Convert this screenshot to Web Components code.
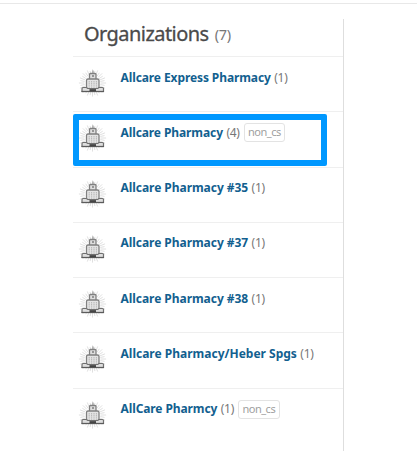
<!DOCTYPE html>
<html lang="en"><head><meta charset="utf-8"><title>Organizations</title>
<style>body{margin:0;background:#fff;font-family:"Noto Sans","Open Sans",sans-serif}
.wide{--name-spacing:0px}.mid{--name-spacing:-.05px}</style></head>
<body>
<org-panel count="7">
<org-row name="Allcare Express Pharmacy" count="1"></org-row>
<org-row name="Allcare Pharmacy" count="4" tag="non_cs" selected></org-row>
<org-row class="mid" name="Allcare Pharmacy #35" count="1"></org-row>
<org-row class="mid" name="Allcare Pharmacy #37" count="1"></org-row>
<org-row class="mid" name="Allcare Pharmacy #38" count="1"></org-row>
<org-row class="wide" name="Allcare Pharmacy/Heber Spgs" count="1"></org-row>
<org-row name="AllCare Pharmcy" count="1" tag="non_cs"></org-row>
</org-panel>
<script>
class OrgIcon extends HTMLElement{
 constructor(){super();
  let rays='';
  for(let i=0;i<32;i++){const a=i*Math.PI/16,c=Math.cos(a),s=Math.sin(a),r=i%2?12.3:13.6;
   rays+=`M${(14.5+8*c).toFixed(2)} ${(14+8*s).toFixed(2)}L${(14.5+r*c).toFixed(2)} ${(14+r*s).toFixed(2)}`;}
  this.attachShadow({mode:'open'}).innerHTML=`<style>:host{display:block;width:29px;height:28px}svg{display:block}</style>
<svg width="29" height="28" viewBox="0 0 29 28" fill="none">
<path d="${rays}" stroke="#d8d8d8" stroke-width=".8"/>
<path d="M15 1.500v3" stroke="#999" stroke-width="1.200"/>
<path d="M11.500 10V5.500q0-1 1-1h4.500q1 0 1 1V10" fill="#dedede" stroke="#808080" stroke-width="1.300"/>
<path d="M15 6v2" stroke="#777" stroke-width="1.400"/>
<path d="M8.500 20v-8.500q0-1.500 1.500-1.500h9.500q1.500 0 1.500 1.500V20z" fill="#e4e4e4" stroke="#808080" stroke-width="1.300"/>
<path d="M11.200 12v7M13.600 12v7M16 12v7M18.400 12v7" stroke="#b8b8b8" stroke-width="1.100" stroke-dasharray="1.400 .7"/>
<path d="M4 22.500v-3q0-1 1-1h3.500l1.200 1h10l1.200-1h3.600q1 0 1 1v3z" fill="#dedede" stroke="#707070" stroke-width="1.200"/>
<path d="M3.500 22.500h22.500" stroke="#5c5c5c" stroke-width="1.300"/>
<path d="M11.500 21.200h6.500" stroke="#444" stroke-width="2.200"/></svg>`;}
}
customElements.define('org-icon',OrgIcon);
class OrgRow extends HTMLElement{
 connectedCallback(){const g=n=>this.getAttribute(n);
  this.attachShadow({mode:'open'}).innerHTML=`<style>
:host{display:flex;position:relative;box-sizing:border-box;height:55.25px;border-top:1px solid #efefef;padding:11px 0 0 5px}
org-icon{margin-top:1px}
.t{display:flex;margin:0 0 0 13.500px;height:19px;align-items:center;font-size:12px;line-height:18px;white-space:nowrap;color:#777}
b{color:#12608f;letter-spacing:var(--name-spacing,-.1px)}
.c{margin-left:3.500px;letter-spacing:-.3px}
.tag{box-sizing:border-box;height:19px;border:1px solid #e3e3e3;border-radius:3px;margin-left:4px;padding:0 3.500px;font-size:11px;letter-spacing:-.5px;line-height:16px;color:#a0a0a0}
.sel{position:absolute;box-sizing:border-box;left:0;top:2px;width:254px;height:52px;border:6px solid #0098ff;border-radius:2px}
</style><org-icon></org-icon><div class="t"><b>${g('name')}</b><span class="c">(${g('count')})</span>${g('tag')?`<span class="tag">${g('tag')}</span>`:''}</div>${this.hasAttribute('selected')?'<div class="sel"></div>':''}`;}
}
customElements.define('org-row',OrgRow);
class OrgPanel extends HTMLElement{
 constructor(){super();this.attachShadow({mode:'open'}).innerHTML=`<style>
:host{display:block;box-sizing:border-box;height:461px;padding:3px 0 0}
.page{border-top:1px solid #e8e8e8;padding:15px 0 0 73px}
.col{box-sizing:border-box;width:271px;height:432px;border-right:1px solid #dedede}
header{display:flex;align-items:baseline;height:37px;padding-left:11px;box-sizing:border-box;color:#4a4a4a}
h1{margin:0;font-size:20px;font-weight:400;line-height:29px;letter-spacing:-.55px;-webkit-text-stroke:.3px #4a4a4a}
span{font-size:14.500px;margin-left:6px;letter-spacing:-.3px;color:#777;position:relative;top:-1px}
</style><div class="page"><div class="col"><header><h1>Organizations</h1><span>(${this.getAttribute('count')})</span></header><slot></slot></div></div>`;}
}
customElements.define('org-panel',OrgPanel);
</script></body></html>
